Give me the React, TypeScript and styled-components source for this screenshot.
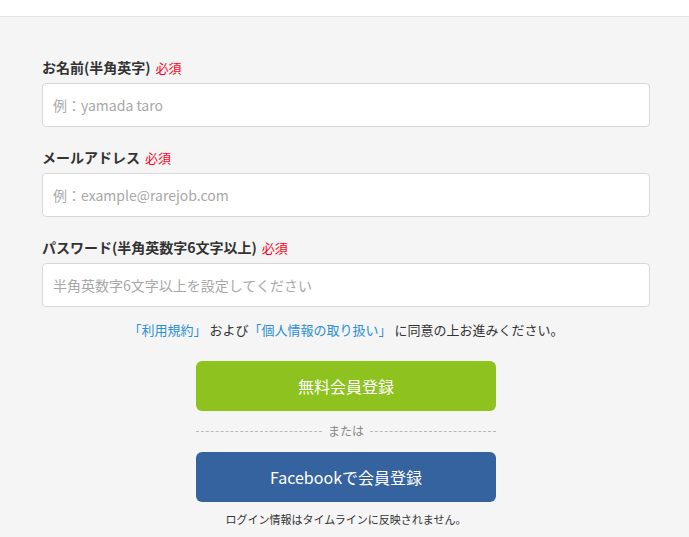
import styled, { createGlobalStyle } from "styled-components";

const GlobalStyle = createGlobalStyle`
  html, body {
    margin: 0;
    padding: 0;
    background: #f5f5f5;
    font-family: "Noto Sans CJK JP", "Noto Sans", sans-serif;
    color: #333;
  }
`;

const fields = [
  { label: "お名前(半角英字)", placeholder: "例：yamada taro", type: "text" },
  { label: "メールアドレス", placeholder: "例：example@rarejob.com", type: "email" },
  { label: "パスワード(半角英数字6文字以上)", placeholder: "半角英数字6文字以上を設定してください", type: "password" },
];

function App() {
  return (
    <>
      <GlobalStyle />
      <TopBar />
      <Page>
        <Form>
          <Fields>
            {fields.map((f) => (
              <Field key={f.label}>
                <Label>
                  {f.label}
                  <Required>必須</Required>
                </Label>
                <Input type={f.type} placeholder={f.placeholder} />
              </Field>
            ))}
          </Fields>
          <Terms>
            <Link>「利用規約」</Link> および<Link>「個人情報の取り扱い」</Link> に同意の上お進みください。
          </Terms>
          <Button $color="#8dc21f">無料会員登録</Button>
          <Divider>
            <span>または</span>
          </Divider>
          <Button $color="#3563a0">Facebookで会員登録</Button>
          <Note>ログイン情報はタイムラインに反映されません。</Note>
        </Form>
      </Page>
    </>
  );
}

export default App;

const TopBar = styled.div`
  height: 16px;
  background: #fff;
  border-bottom: 1px solid #e2e2e2;
`;

const Page = styled.div`
  padding: 40px 39px 0 42px;
`;

const Form = styled.div`
  width: 608px;
  display: flex;
  flex-direction: column;
  align-items: center;
`;

const Fields = styled.div`
  width: 100%;
  display: flex;
  flex-direction: column;
  gap: 20px;
`;

const Field = styled.div`
  display: flex;
  flex-direction: column;
`;

const Label = styled.label`
  display: flex;
  align-items: baseline;
  height: 20px;
  font-size: 14px;
  font-weight: bold;
  color: #333;
  line-height: 20px;
  margin-bottom: 6px;
`;

const Required = styled.span`
  color: #ff0020;
  font-size: 13px;
  font-weight: normal;
  margin-left: 5px;
`;

const Input = styled.input`
  box-sizing: border-box;
  width: 100%;
  height: 44px;
  padding: 0 10px;
  border: 1px solid #d8d8d8;
  border-radius: 4px;
  background: #fff;
  font-family: inherit;
  font-size: 14px;
  color: #333;
  &::placeholder {
    color: #a8a8a8;
  }
`;

const Terms = styled.p`
  margin: 14px 0 22px;
  font-size: 13px;
  color: #333;
  line-height: 18px;
`;

const Link = styled.a`
  color: #2b8fd6;
`;

const Button = styled.button<{ $color: string }>`
  width: 300px;
  height: 50px;
  border: none;
  border-radius: 6px;
  background: ${(p) => p.$color};
  color: #fff;
  font-family: inherit;
  font-size: 16px;
`;

const Divider = styled.div`
  width: 300px;
  display: flex;
  align-items: center;
  gap: 6px;
  margin: 10px 0 11px;
  font-size: 12px;
  color: #888;
  line-height: 20px;
  &::before,
  &::after {
    content: "";
    flex: 1;
    border-top: 1px dashed #b8b8b8;
  }
`;

const Note = styled.p`
  margin: 9px 0 0;
  font-size: 11px;
  color: #333;
`;
